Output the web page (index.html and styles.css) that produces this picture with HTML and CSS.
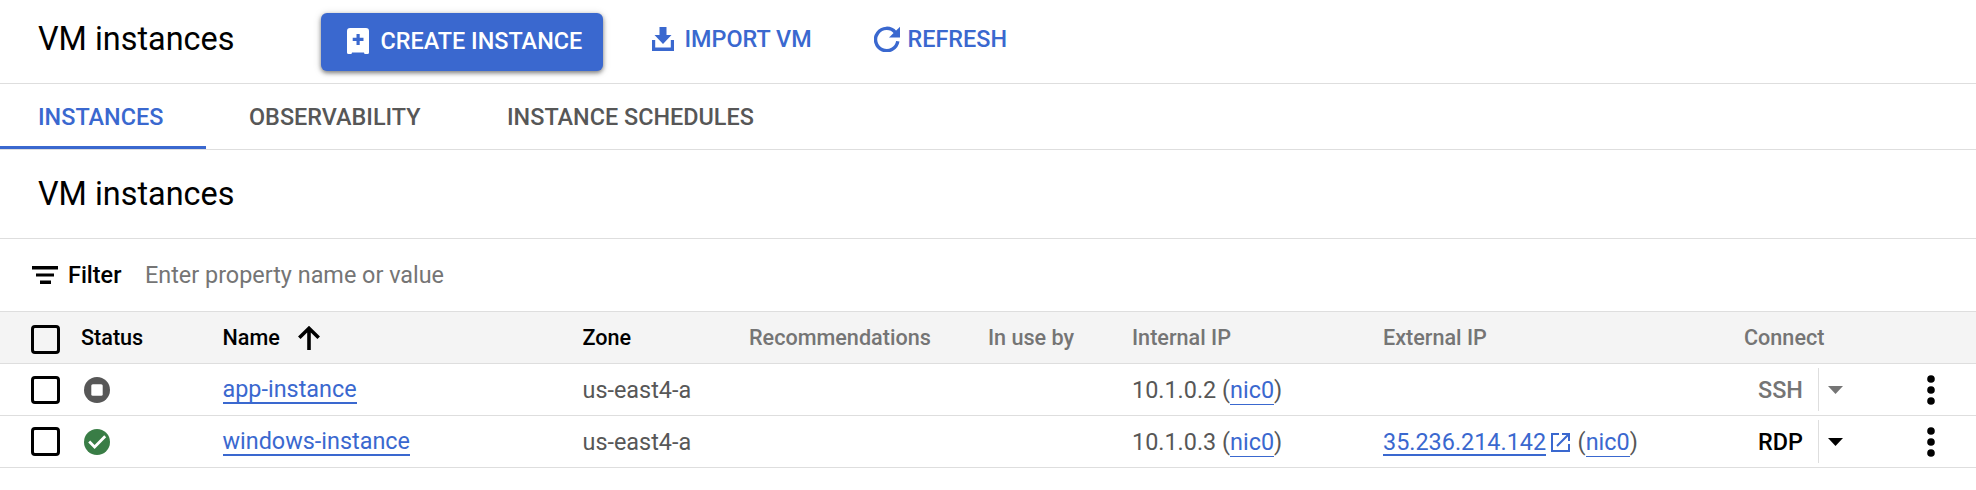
FILE: index.html
```html
<!DOCTYPE html>
<html lang="en">
<head>
<meta charset="utf-8">
<title>VM instances</title>
<link rel="stylesheet" href="styles.css">
</head>
<body>
<header class="topbar">
  <h1 class="title">VM instances</h1>
  <button class="create">
    <svg class="create-icon" width="22" height="26" viewBox="0 0 22 26"><path fill="#fff" fill-rule="evenodd" d="M3 0h16q3 0 3 3v21.500q0 1.500-1.500 1.500h-2.500q-.8 0-1-1.500h-12q-.2 1.500-1 1.500H1.500q-1.500 0-1.500-1.500V3q0-3 3-3zM9.500 6v3.800H5.700v3.200h3.800V17h3.200v-4h3.800V9.800h-3.800V6z"/></svg>
    <span>CREATE INSTANCE</span>
  </button>
  <button class="action import">
    <svg width="22" height="24" viewBox="0 0 22 24"><path fill="#3a68cf" d="M7.500 0h7v8h5L11 17 2.500 8h5zM0 13h3.200v7.500h15.600V13H22v11H0z"/></svg>
    <span>IMPORT VM</span>
  </button>
  <button class="action refresh">
    <svg width="26" height="26" viewBox="0 0 26 26"><path fill="none" stroke="#3a68cf" stroke-width="3.400" d="M21.300 6.300A11.200 11.200 0 1 0 23.800 15.300"/><path fill="#3a68cf" d="M26 .8v10.700H15z"/></svg>
    <span>REFRESH</span>
  </button>
</header>
<nav class="tabs">
  <a class="tab tab-active">INSTANCES</a>
  <a class="tab tab-obs">OBSERVABILITY</a>
  <a class="tab tab-sched">INSTANCE SCHEDULES</a>
</nav>
<section class="section-head"><h2 class="title">VM instances</h2></section>
<div class="filter">
  <svg width="26" height="18" viewBox="0 0 26 18"><path d="M0 0h26v3.400H0zM4 7.400h18v3.200H4zM8 14.600h11V18H8z"/></svg>
  <span class="filter-label">Filter</span>
  <span class="filter-hint">Enter property name or value</span>
</div>
<main class="table">
  <div class="row head">
    <span class="box"></span>
    <span class="strong status-head">Status</span>
    <span class="strong sort"><span>Name</span><svg width="22" height="24" viewBox="0 0 22 24"><path fill="none" stroke="#000" stroke-width="3.600" d="M11 24V3M1.300 11.800 11 2.300l9.700 9.500"/></svg></span>
    <span class="strong zone-head">Zone</span>
    <span class="rec-head">Recommendations</span>
    <span>In use by</span>
    <span>Internal IP</span>
    <span>External IP</span>
    <span>Connect</span>
    <span></span>
  </div>
  <div class="row">
    <span class="box box-short"></span>
    <svg class="state" width="26" height="26" viewBox="0 0 26 26"><circle cx="13" cy="13" r="13" fill="#575757"/><rect x="7.300" y="7.300" width="11.400" height="11.400" rx="1.500" fill="#fff"/></svg>
    <span class="name"><a class="link">app-instance</a></span>
    <span class="zone">us-east4-a</span>
    <span></span><span></span>
    <span class="ip">10.1.0.2 (<a class="nic">nic0</a>)</span>
    <span></span>
    <span class="connect connect-off"><b>SSH</b><i class="caret"><svg width="15" height="8" viewBox="0 0 15 8"><path fill="currentColor" d="M0 0h15L7.500 8z"/></svg></i></span>
    <svg class="dots" width="8" height="30" viewBox="0 0 8 30"><circle cx="4" cy="4" r="3.800"/><circle cx="4" cy="15" r="3.800"/><circle cx="4" cy="26" r="3.800"/></svg>
  </div>
  <div class="row">
    <span class="box"></span>
    <svg class="state" width="26" height="26" viewBox="0 0 26 26"><circle cx="13" cy="13" r="13" fill="#397d46"/><path fill="none" stroke="#fff" stroke-width="2.800" d="M5.200 12.500l5.400 5.400L21.200 7.300"/></svg>
    <span class="name"><a class="link">windows-instance</a></span>
    <span class="zone">us-east4-a</span>
    <span></span><span></span>
    <span class="ip">10.1.0.3 (<a class="nic">nic0</a>)</span>
    <span class="ip external"><a class="address">35.236.214.142</a><svg width="19" height="19" viewBox="0 0 19 19"><path fill="none" stroke="#3a68cf" stroke-width="2" d="M8 1H1v17h17v-7M11 1h7v7M17.500 1.500 6 13"/></svg><span>(<a class="nic">nic0</a>)</span></span>
    <span class="connect"><b>RDP</b><i class="caret"><svg width="15" height="8" viewBox="0 0 15 8"><path fill="currentColor" d="M0 0h15L7.500 8z"/></svg></i></span>
    <svg class="dots" width="8" height="30" viewBox="0 0 8 30"><circle cx="4" cy="4" r="3.800"/><circle cx="4" cy="15" r="3.800"/><circle cx="4" cy="26" r="3.800"/></svg>
  </div>
</main>
</body>
</html>
```
FILE: styles.css
```css
* { box-sizing: border-box; }
body { margin: 0; background: #fff; color: #000; font-family: Roboto, sans-serif; font-size: 23.4px; white-space: nowrap; }
h1, h2 { margin: 0; font-weight: 400; }
svg { display: block; flex: none; }
button { border: 0; background: none; font: inherit; padding: 0; }
.title { font-size: 32.4px; line-height: 40px; }
.topbar { display: flex; align-items: flex-start; height: 84px; border-bottom: 1px solid #dedede; padding-left: 38px; }
.topbar .title { width: 283px; padding-top: 19px; }
.create { display: flex; align-items: center; gap: 11.5px; width: 282px; height: 58px; margin-top: 13px; padding: 0 0 2px 26px; border-radius: 6px; background: #3a68cf; color: #fff; font-weight: 500; box-shadow: 0 2px 4px rgba(0,0,0,.45), 0 1px 8px rgba(0,0,0,.15); }
.action { display: flex; align-items: center; height: 28px; margin-top: 25px; color: #3a68cf; font-weight: 500; gap: 10.5px; }
.import { margin-left: 49px; width: 222px; }
.refresh { gap: 7.5px; }
.tabs { display: flex; height: 66px; border-bottom: 1px solid #dedede; color: #575757; font-weight: 500; }
.tab { line-height: 67px; height: 65px; }
.tab-active { width: 206px; padding-left: 38px; color: #3a68cf; border-bottom: 3px solid #3a68cf; }
.tab-obs { width: 301px; padding-left: 43px; }
.section-head { height: 89px; border-bottom: 1px solid #dedede; padding: 24px 38px; }
.filter { display: flex; align-items: center; height: 72px; padding: 0 0 0 32px; }
.filter-label { font-weight: 500; margin-left: 10px; width: 77px; }
.filter-hint { color: #757575; }
.table { border-top: 1px solid #dedede; }
.row { display: grid; grid-template-columns: 51px 140.5px 360px 166.5px 239px 144px 251px 361px 182.5px 1fr; align-items: center; height: 52px; padding-left: 31px; border-bottom: 1px solid #dedede; color: #575757; }
.head { background: #f4f4f4; color: #757575; font-weight: 500; font-size: 21.6px; }
.strong { color: #000; }
.status-head { margin-left: -1px; }
.box { width: 29px; height: 29px; border: 3px solid #000; border-radius: 4px; margin-top: 3px; }
.row:not(.head) .box { margin-top: 0; }
.box-short { height: 28px; }
.sort { display: flex; align-items: center; gap: 18.5px; }
.state { margin-left: 2px; }
.link { color: #3a68cf; display: inline-block; line-height: 26px; border-bottom: 2px solid #3a68cf; }
.ip { padding-top: 2px; }
.nic { color: #3a68cf; display: inline-block; line-height: 28px; border-bottom: 1px solid #3a68cf; }
.address { color: #3a68cf; display: inline-block; line-height: 24px; border-bottom: 2px solid #3a68cf; }
.external { display: flex; align-items: center; }
.external svg { margin: 0 7.500px 0 5px; }
.connect { display: flex; align-items: center; color: #000; padding-left: 14px; height: 43px; }
.connect b { font-weight: 500; width: 60px; }
.connect-off { color: #757575; }
.caret { height: 43px; border-left: 1px solid #dedede; padding-left: 9px; display: flex; align-items: center; }
```
